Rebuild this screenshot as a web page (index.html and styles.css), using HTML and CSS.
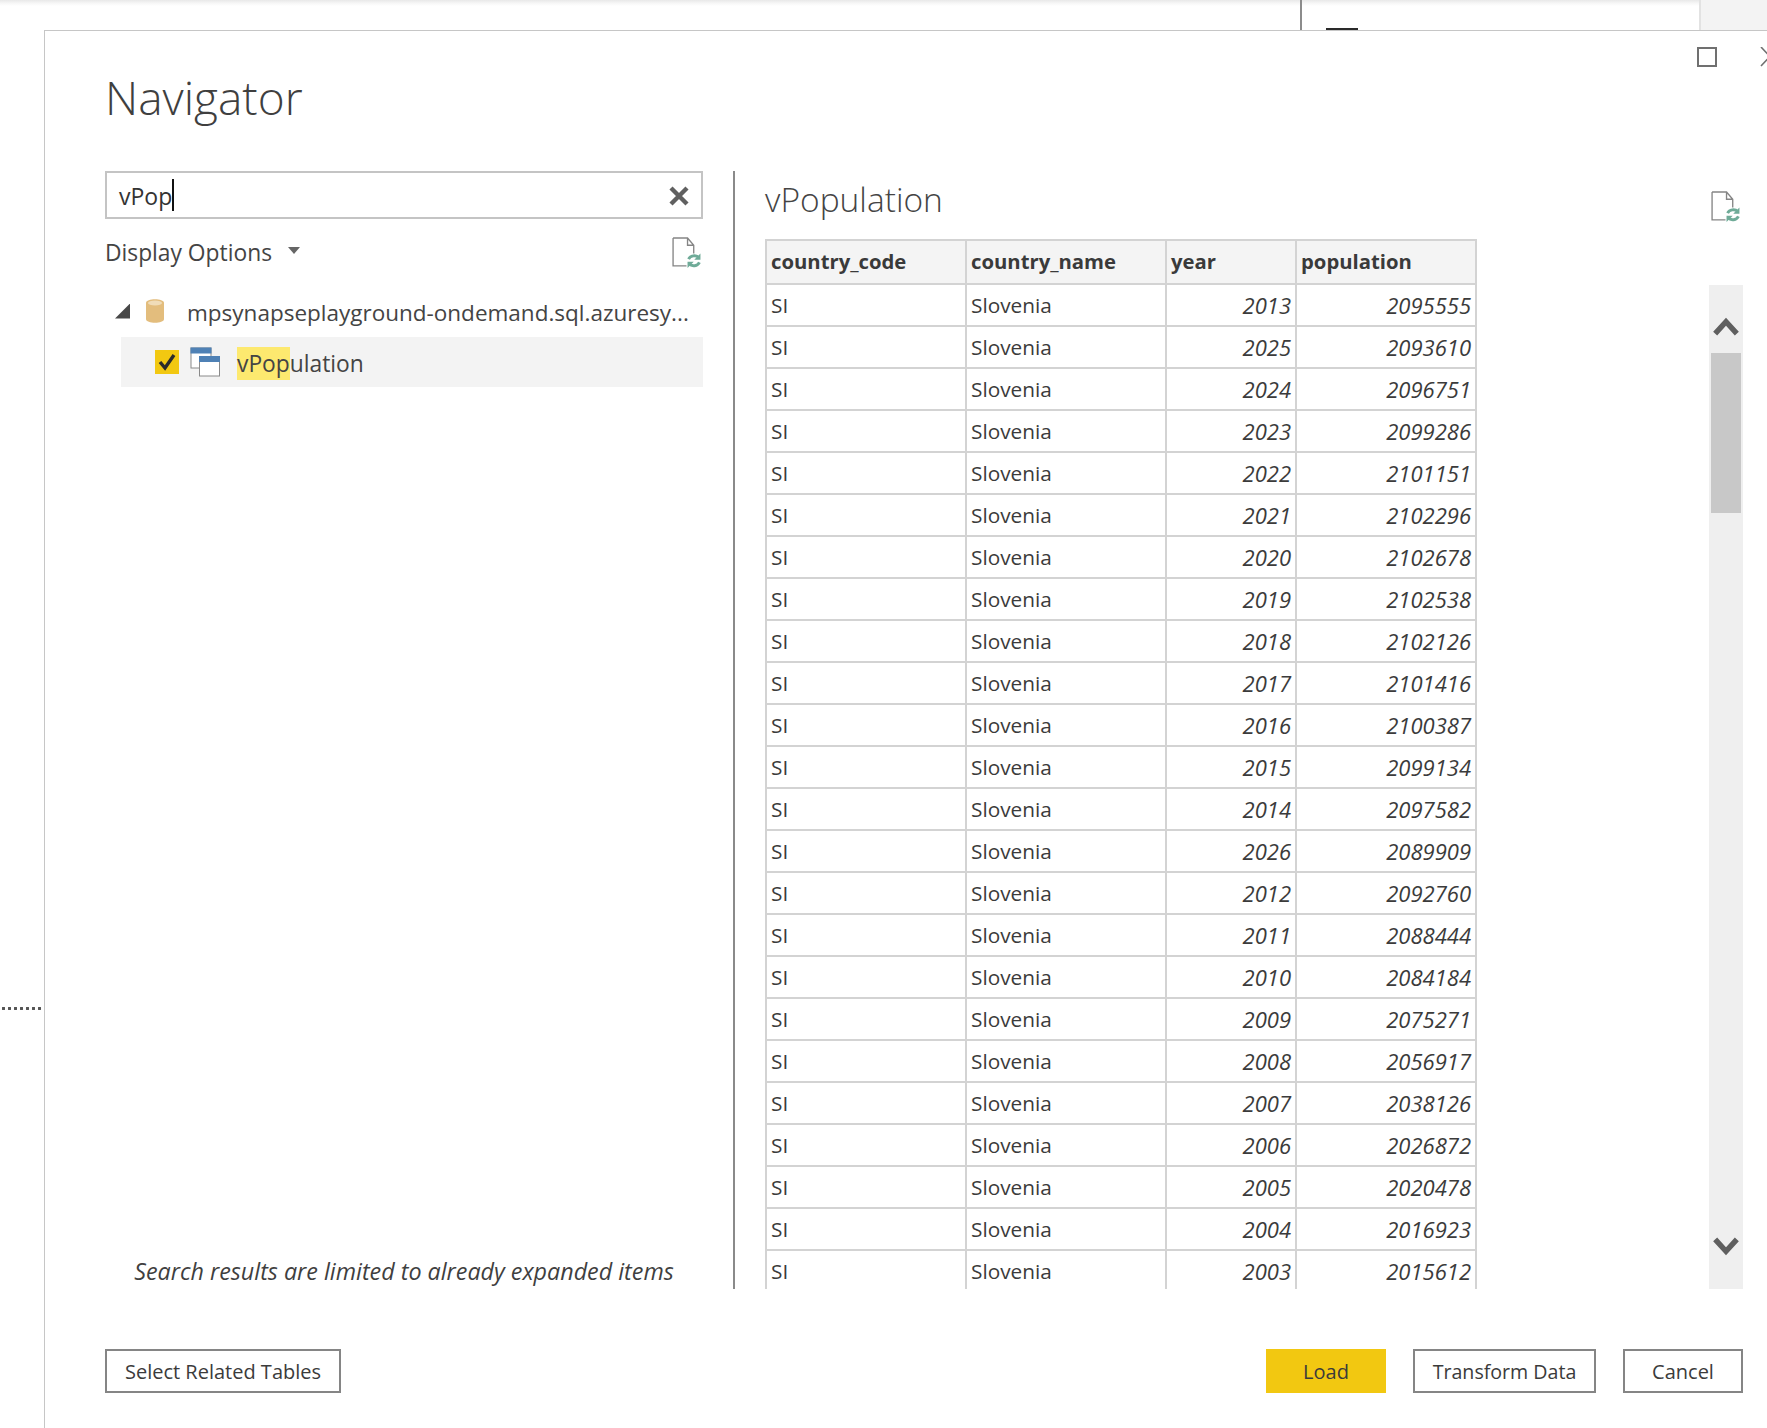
FILE: index.html
```html
<!DOCTYPE html>
<html lang="en">
<head>
<meta charset="utf-8">
<title>Navigator</title>
<link rel="stylesheet" href="styles.css">
</head>
<body>
<div class="desktop">
  <div class="topbar">
    <div class="topbar-fill"></div>
    <div class="topbar-pane"><span class="topbar-dash"></span></div>
    <div class="topbar-side"></div>
  </div>
  <div class="dots"></div>
  <section class="dialog">
    <div class="winctl">
      <span class="maximize"></span>
      <svg class="close" viewBox="0 0 20 20"><path d="M1 0 L19 19 M19 0 L1 19"/></svg>
    </div>
    <h1 class="title">Navigator</h1>
    <div class="main">
      <div class="left">
        <div class="search">
          <span class="search-text">vPop</span><span class="caret"></span>
          <svg class="clear" viewBox="0 0 20 20"><path d="M2 2 L18 18 M18 2 L2 18"/></svg>
        </div>
        <div class="options">
          <span class="options-label">Display Options</span>
          <span class="options-arrow"></span>
          <svg class="refresh refresh-small" viewBox="0 0 28 30">
            <path class="doc" d="M1 1 H15 L21 8 V16 M1 1 V28 H14 M15 1 V8 H21"/>
            <path class="sync" d="M16 21.5 A6 5.5 0 0 1 26 20 M16.5 26 A6 5.5 0 0 0 26.5 24.5"/>
            <path class="sync-tip" d="M27.5 16 V22 H21.5 Z M15 30 V24 H21 Z"/>
          </svg>
        </div>
        <div class="tree">
          <div class="tree-server">
            <span class="twisty"></span>
            <svg class="db" viewBox="0 0 18 24"><path d="M0 4 C0 -1 18 -1 18 4 V20 C18 25 0 25 0 20 Z"/><ellipse cx="9" cy="4" rx="7" ry="2.4"/></svg>
            <span class="server-name">mpsynapseplayground-ondemand.sql.azuresy...</span>
          </div>
          <div class="tree-item">
            <span class="check"><svg viewBox="0 0 24 24"><path d="M5 12 L10 18 L19 5"/></svg></span>
            <svg class="view-icon" viewBox="0 0 30 30">
              <rect class="w" x="1" y="1" width="20" height="20"/>
              <rect class="b" x="0.5" y="0.5" width="21" height="6"/>
              <rect class="w" x="9.5" y="9.5" width="20" height="19.5"/>
              <rect class="b" x="9" y="9" width="21" height="6"/>
            </svg>
            <span class="item-name"><span class="match">vPop</span>ulation</span>
          </div>
        </div>
        <p class="note">Search results are limited to already expanded items</p>
      </div>
      <div class="divider"></div>
      <div class="right">
        <div class="preview-head">
          <h2 class="preview-title">vPopulation</h2>
          <svg class="refresh refresh-large" viewBox="0 0 28 30">
            <path class="doc" d="M1 1 H15 L21 8 V16 M1 1 V28 H14 M15 1 V8 H21"/>
            <path class="sync" d="M16 21.5 A6 5.5 0 0 1 26 20 M16.5 26 A6 5.5 0 0 0 26.5 24.5"/>
            <path class="sync-tip" d="M27.5 16 V22 H21.5 Z M15 30 V24 H21 Z"/>
          </svg>
        </div>
        <div class="preview-body">
          <div class="table-wrap">
            <table class="grid">
              <colgroup><col class="c1"><col class="c2"><col class="c3"><col class="c4"></colgroup>
              <thead><tr><th>country_code</th><th>country_name</th><th>year</th><th>population</th></tr></thead>
              <tbody>
                <tr><td>SI</td><td>Slovenia</td><td class="num">2013</td><td class="num">2095555</td></tr>
                <tr><td>SI</td><td>Slovenia</td><td class="num">2025</td><td class="num">2093610</td></tr>
                <tr><td>SI</td><td>Slovenia</td><td class="num">2024</td><td class="num">2096751</td></tr>
                <tr><td>SI</td><td>Slovenia</td><td class="num">2023</td><td class="num">2099286</td></tr>
                <tr><td>SI</td><td>Slovenia</td><td class="num">2022</td><td class="num">2101151</td></tr>
                <tr><td>SI</td><td>Slovenia</td><td class="num">2021</td><td class="num">2102296</td></tr>
                <tr><td>SI</td><td>Slovenia</td><td class="num">2020</td><td class="num">2102678</td></tr>
                <tr><td>SI</td><td>Slovenia</td><td class="num">2019</td><td class="num">2102538</td></tr>
                <tr><td>SI</td><td>Slovenia</td><td class="num">2018</td><td class="num">2102126</td></tr>
                <tr><td>SI</td><td>Slovenia</td><td class="num">2017</td><td class="num">2101416</td></tr>
                <tr><td>SI</td><td>Slovenia</td><td class="num">2016</td><td class="num">2100387</td></tr>
                <tr><td>SI</td><td>Slovenia</td><td class="num">2015</td><td class="num">2099134</td></tr>
                <tr><td>SI</td><td>Slovenia</td><td class="num">2014</td><td class="num">2097582</td></tr>
                <tr><td>SI</td><td>Slovenia</td><td class="num">2026</td><td class="num">2089909</td></tr>
                <tr><td>SI</td><td>Slovenia</td><td class="num">2012</td><td class="num">2092760</td></tr>
                <tr><td>SI</td><td>Slovenia</td><td class="num">2011</td><td class="num">2088444</td></tr>
                <tr><td>SI</td><td>Slovenia</td><td class="num">2010</td><td class="num">2084184</td></tr>
                <tr><td>SI</td><td>Slovenia</td><td class="num">2009</td><td class="num">2075271</td></tr>
                <tr><td>SI</td><td>Slovenia</td><td class="num">2008</td><td class="num">2056917</td></tr>
                <tr><td>SI</td><td>Slovenia</td><td class="num">2007</td><td class="num">2038126</td></tr>
                <tr><td>SI</td><td>Slovenia</td><td class="num">2006</td><td class="num">2026872</td></tr>
                <tr><td>SI</td><td>Slovenia</td><td class="num">2005</td><td class="num">2020478</td></tr>
                <tr><td>SI</td><td>Slovenia</td><td class="num">2004</td><td class="num">2016923</td></tr>
                <tr><td>SI</td><td>Slovenia</td><td class="num">2003</td><td class="num">2015612</td></tr>
              </tbody>
            </table>
          </div>
          <div class="scrollbar">
            <svg class="chev chev-up" viewBox="0 0 24 18"><path d="M2 16 L12 5 L22 16"/></svg>
            <div class="thumb"></div>
            <svg class="chev chev-down" viewBox="0 0 24 18"><path d="M2 2 L12 13 L22 2"/></svg>
          </div>
        </div>
      </div>
    </div>
    <div class="footer">
      <button class="btn btn-related">Select Related Tables</button>
      <div class="footer-actions">
        <button class="btn btn-primary">Load</button>
        <button class="btn btn-transform">Transform Data</button>
        <button class="btn btn-cancel">Cancel</button>
      </div>
    </div>
  </section>
</div>
</body>
</html>
```
FILE: styles.css
```css
* { box-sizing: border-box; }
html, body { margin: 0; padding: 0; background: #fff; }
body { font-family: "Open Sans", "Noto Sans", "Liberation Sans", sans-serif; color: #3b3b3b; }

.desktop { position: relative; width: 1767px; height: 1428px; overflow: hidden; background: #fff; }

.topbar { display: flex; height: 30px; background: linear-gradient(#e8e8e8 0, #f6f6f6 3px, #fff 6px); }
.topbar-fill { width: 1300px; }
.topbar-pane { position: relative; width: 401px; border-left: 2px solid #8c8c8c; border-right: 2px solid #e2e2e2; }
.topbar-dash { position: absolute; left: 24px; bottom: 0; width: 32px; height: 2px; background: #2a2a2a; }
.topbar-side { flex: 1; background: #f3f3f3; }

.dots { position: absolute; left: 2px; top: 1007px; width: 40px; height: 3px; background: radial-gradient(circle at 1.5px 1.5px, #555 1.4px, transparent 1.7px) 0 0 / 6px 3px repeat-x; }

.dialog { position: absolute; left: 44px; top: 30px; right: 0; bottom: 0; background: #fff; border-left: 1px solid #c6c6c6; border-top: 1px solid #c6c6c6; padding: 0 24px 0 60px; display: flex; flex-direction: column; }

.winctl { position: absolute; top: 16px; right: 0; display: flex; gap: 43px; }
.maximize { width: 20px; height: 20px; border: 2px solid #707070; }
.close { width: 20px; height: 20px; margin-right: -13px; }
.close path { stroke: #707070; stroke-width: 1.6; fill: none; }

.title { margin: 0; height: 140px; padding-top: 36px; font-size: 46px; line-height: 60px; font-weight: 300; color: #3f3f3f; }

.main { display: flex; height: 1118px; }
.left { width: 598px; display: flex; flex-direction: column; }
.divider { width: 2px; margin: 0 30px; background: #8a8a8a; }
.right { flex: 1; display: flex; flex-direction: column; min-width: 0; }

.search { position: relative; height: 48px; border: 2px solid #c4c4c4; display: flex; align-items: center; padding-left: 12px; font-size: 23px; color: #333; }
.search-text { position: relative; top: 1px; }
.caret { width: 2px; height: 32px; background: #111; margin-left: 0; }
.clear { position: absolute; right: 12px; top: 13px; width: 20px; height: 20px; }
.clear path { stroke: #606060; stroke-width: 4.4; fill: none; }

.options { display: flex; align-items: center; height: 66px; font-size: 22.8px; color: #444; padding-right: 2px; }
.options-arrow { margin-left: 16px; margin-top: -3px; width: 0; height: 0; border-left: 6.5px solid transparent; border-right: 6.5px solid transparent; border-top: 7px solid #666; }
.refresh { fill: none; }
.refresh .doc { stroke: #858585; stroke-width: 1.3; }
.refresh .sync { stroke: #6fab98; stroke-width: 2.8; }
.refresh .sync-tip { fill: #6fab98; }
.refresh-small { width: 29px; height: 31px; margin-left: auto; }

.tree { display: flex; flex-direction: column; }
.tree-server { display: flex; align-items: center; height: 52px; padding-left: 10px; font-size: 22.5px; color: #444; }
.twisty { width: 15px; height: 15px; background: #484848; clip-path: polygon(100% 0, 100% 100%, 0 100%); }
.db { width: 18px; height: 24px; margin-left: 16px; }
.db path { fill: #e3bd7d; }
.db ellipse { fill: #f0dcb8; }
.server-name { margin-left: 23px; white-space: nowrap; position: relative; top: 1px; }

.tree-item { display: flex; align-items: center; height: 50px; margin-left: 16px; background: #f3f3f3; font-size: 22.8px; color: #444; }
.check { width: 24px; height: 24px; margin-left: 34px; background: #f2c811; display: flex; }
.check svg { width: 24px; height: 24px; }
.check path { fill: none; stroke: #2b2b2b; stroke-width: 3.4; }
.view-icon { width: 30px; height: 30px; margin-left: 11px; }
.view-icon .w { fill: #fff; stroke: #8a8a8a; stroke-width: 1; }
.view-icon .b { fill: #4f81b5; }
.item-name { margin-left: 17px; position: relative; top: 1px; }
.match { display: inline-block; background: #fde96f; line-height: 33px; }

.note { margin: auto 0 0; height: 36px; line-height: 36px; text-align: center; font-size: 23.3px; font-style: italic; font-weight: 400; color: #3f3f3f; white-space: nowrap; }

.preview-head { display: flex; align-items: flex-start; justify-content: space-between; height: 68px; }
.preview-title { margin: 0; font-size: 33.5px; line-height: 56px; font-weight: 300; color: #444; }
.refresh-large { width: 29px; height: 31px; margin-top: 20px; margin-right: 3px; }

.preview-body { flex: 1; display: flex; min-height: 0; }
.table-wrap { flex: 1; overflow: hidden; min-width: 0; }
.grid { border-collapse: collapse; table-layout: fixed; width: 710px; font-size: 20.8px; }
.c1 { width: 200px; } .c2 { width: 200px; } .c3 { width: 130px; } .c4 { width: 180px; }
.grid th, .grid td { border: 2px solid #d3d3d3; padding: 0 4px; height: 42px; text-align: left; white-space: nowrap; }
.grid th { height: 44px; padding-bottom: 2px; font-size: 20.3px; background: #f4f4f4; font-weight: 700; color: #3a3a3a; }
.grid .num { text-align: right; font-style: italic; font-size: 22px; }

.scrollbar { width: 34px; margin-top: 46px; background: #efefef; display: flex; flex-direction: column; align-items: center; }
.chev { width: 26px; height: 20px; }
.chev path { fill: none; stroke: #5f5f5f; stroke-width: 5; }
.chev-up { margin-top: 31px; }
.thumb { width: 30px; height: 160px; margin-top: 17px; background: #c8c8c8; }
.chev-down { margin-top: auto; margin-bottom: 32px; }

.footer { display: flex; justify-content: space-between; margin-top: 60px; }
.footer-actions { display: flex; gap: 27px; }
.btn { height: 44px; background: #fff; border: 2px solid #858585; font-family: inherit; font-size: 20px; color: #3b3b3b; padding: 0; }
.btn-related { width: 236px; }
.btn-primary { width: 120px; background: #f2c811; border-color: #f2c811; }
.btn-transform { width: 183px; font-size: 19.6px; }
.btn-cancel { width: 120px; }
```
